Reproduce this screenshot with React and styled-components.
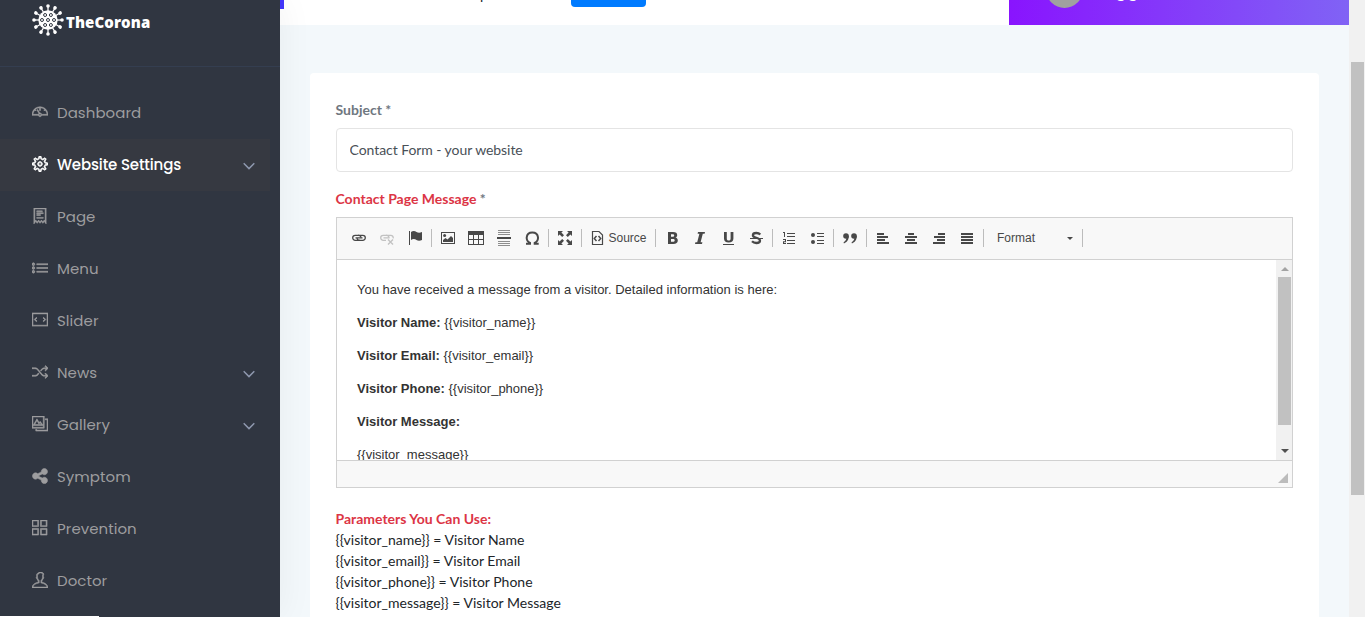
import React from 'react';
import styled, { createGlobalStyle } from 'styled-components';
import {
  TfiDashboard,
  TfiSettings,
  TfiReceipt,
  TfiList,
  TfiLayoutSlider,
  TfiControlShuffle,
  TfiGallery,
  TfiSharethis,
  TfiLayoutGrid2,
  TfiUser,
} from 'react-icons/tfi';

const GlobalStyle = createGlobalStyle`
  * {
    box-sizing: border-box;
  }

  body {
    margin: 0;
    overflow: hidden;
    background: #f3f8fb;
    font-family: Lato, sans-serif;
    font-size: 14px;
  }
`;

const Page = styled.div`
  display: flex;
  height: 617px;
  overflow: hidden;
`;

const Sidebar = styled.aside`
  position: relative;
  z-index: 1;
  flex: none;
  width: 280px;
  background: #303641;
  box-shadow: 2px 0 32px rgba(0, 0, 0, 0.05);
`;

const SidebarHeader = styled.div`
  display: flex;
  align-items: flex-start;
  height: 67px;
  padding: 4px 32px 0;
  border-bottom: 1px solid #343e50;
`;

const Brand = styled.span`
  margin: 7px 0 0 2px;
  color: #fff;
  font: 800 15px/22px 'Open Sans', sans-serif;
  letter-spacing: 0.1px;
`;

const Menu = styled.nav`
  padding-top: 20px;
`;

const MenuItem = styled.a`
  display: flex;
  align-items: center;
  width: 270px;
  height: 52px;
  padding: 0 15px 2px 32px;
  color: ${(props) => (props.$active ? '#fff' : '#9d9d9f')};
  background: ${(props) => (props.$active ? '#363941' : 'transparent')};
`;

const MenuIcon = styled.span`
  display: flex;
  margin: 0 9px 1px 0;

  svg {
    stroke: currentColor;
    stroke-width: ${(props) => (props.$active ? 0.8 : 0.6)};
  }
`;

const MenuLabel = styled.span`
  flex: 1;
  font-family: Poppins, Inter, sans-serif;
  font-size: 15px;
  font-weight: ${(props) => (props.$active ? 500 : 400)};
  letter-spacing: ${(props) => (props.$active ? '-0.15px' : '0.05px')};
`;

const Content = styled.main`
  display: flex;
  flex: 1;
  flex-direction: column;
`;

const TopBar = styled.header`
  display: flex;
  justify-content: space-between;
  height: 25px;
  overflow: hidden;
  background: #fff;
`;

const TitleArea = styled.div`
  display: flex;
  align-items: flex-start;
`;

const Accent = styled.span`
  width: 4px;
  height: 9px;
  background: #4336fb;
`;

const Crumb = styled.span`
  width: 91px;
  margin: -14px 0 0 196px;
  color: #212529;
  font-size: 14px;
  line-height: 17px;
`;

const TopButton = styled.span`
  width: 75px;
  height: 7px;
  background: #007bff;
  border-radius: 0 0 4px 4px;
`;

const Profile = styled.div`
  display: flex;
  align-items: flex-start;
  width: 340px;
  padding-left: 37px;
  background: linear-gradient(to right, #8914fe 0%, #8063f5 100%);
`;

const Avatar = styled.span`
  width: 37px;
  height: 37px;
  margin-top: -29px;
  background: #a0a0a0;
  border-radius: 50%;
`;

const ProfileName = styled.span`
  margin: -20px 0 0 32px;
  color: #fff;
  font: 500 17px/20px Poppins, Inter, sans-serif;
  letter-spacing: 0.5px;
`;

const Card = styled.section`
  flex: 1;
  margin: 48px 30px 0;
  padding: 26px 26px 0 25px;
  background: #fff;
  border-radius: 4px 4px 0 0;
`;

const Label = styled.label`
  display: block;
  padding-left: 0.5px;
  color: #6f7780;
  font-weight: 700;
  line-height: 21px;

  em {
    color: #dc3545;
    font-style: normal;
  }
`;

const Input = styled.input`
  display: block;
  width: 957px;
  height: 44px;
  margin: 8px 0 16px 1px;
  padding: 0 13px 2px 12.5px;
  color: #495057;
  font: 14px Lato, sans-serif;
  letter-spacing: -0.06px;
  border: 1px solid #e4e4e4;
  border-radius: 4px;
  outline: none;
`;

const Editor = styled.div`
  width: 957px;
  height: 271px;
  margin: 8px 0 20px 1px;
  border: 1px solid #d1d1d1;
`;

const Toolbar = styled.div`
  display: flex;
  align-items: center;
  height: 42px;
  padding: 0 8px 1px;
  background: #f8f8f8;
  border-bottom: 1px solid #d1d1d1;
`;

const ToolButton = styled.span`
  display: flex;
  flex: none;
  align-items: center;
  gap: 2.5px;
  width: ${(props) => props.$width || 28}px;
  padding: 0 6px;
  color: #484848;
  font: 12px 'Liberation Sans', Arial, sans-serif;
  opacity: ${(props) => (props.$disabled ? 0.3 : 1)};

  svg {
    flex: none;
  }
`;

const Separator = styled.span`
  width: 1px;
  height: 18px;
  margin: 0 2px;
  background: #bcbcbc;
`;

const Combo = styled.span`
  display: flex;
  align-items: center;
  justify-content: space-between;
  width: 94px;
  padding: 0 7px 0 11px;
  color: #484848;
  font: 12px 'Liberation Sans', Arial, sans-serif;
`;

const Caret = styled.i`
  margin-top: 1px;
  border: 3px solid transparent;
  border-top-color: #484848;
  border-bottom: 0;
`;

const EditorBody = styled.div`
  display: flex;
  height: 200px;
  overflow: hidden;
`;

const Document = styled.div`
  flex: 1;
  padding: 20px 20px 0;
  color: #333;
  font: 13px/20px 'Liberation Sans', Arial, sans-serif;

  p {
    margin: 0 0 13px;
  }
`;

const InnerScroll = styled.div`
  display: flex;
  flex-direction: column;
  justify-content: space-between;
  align-items: center;
  width: 16px;
  padding: 7px 0 7px;
  background: #f1f1f1;
`;

const InnerThumb = styled.span`
  width: 13px;
  height: 148px;
  margin: 6px 0 auto 1px;
  background: #c1c1c1;
`;

const ScrollArrow = styled.i`
  margin-left: 1px;
  border: 4px solid transparent;
  ${(props) =>
    props.$up
      ? 'border-top: 0; border-bottom-color: #a3a3a3;'
      : 'border-bottom: 0; border-top-color: #505050;'}
`;

const EditorFooter = styled.div`
  display: flex;
  align-items: flex-end;
  justify-content: flex-end;
  height: 27px;
  padding: 0 4px 4px;
  background: #f8f8f8;
  border-top: 1px solid #d1d1d1;
`;

const Resizer = styled.i`
  border: 5px solid #bcbcbc;
  border-top-color: transparent;
  border-left-color: transparent;
`;

const Params = styled.div`
  padding-left: 0.5px;
  color: #212529;
  line-height: 21px;

  strong {
    display: block;
    color: #dc3545;
  }
`;

const PageScroll = styled.div`
  width: 16px;
  padding: 62px 1px 0 2px;
  background: #f1f1f1;
`;

const PageThumb = styled.div`
  height: 433px;
  background: #c1c1c1;
`;

const StatusBubble = styled.div`
  position: fixed;
  bottom: 0;
  left: 0;
  z-index: 2;
  width: 99px;
  height: 1px;
  background: #fff;
`;

const VirusLogo = () => (
  <svg width="32" height="32" viewBox="-16 -16 32 32" fill="#fff" stroke="#fff">
    <circle r="9.7" stroke="none" />
    {[...Array(12)].map((_, i) => (
      <g key={i} transform={`rotate(${i * 30})`}>
        <path d="M0-9V-14" strokeWidth="1.3" />
        <circle cy="-14" r="1.8" stroke="none" />
      </g>
    ))}
    {[[-2.9, -5], [2.9, -5], [-6, 0], [0, 0], [6, 0], [-2.9, 5], [2.9, 5]].map(([x, y]) => (
      <circle key={`${x},${y}`} cx={x} cy={y} r="1.5" fill="#fff" stroke="#303641" strokeWidth="1" />
    ))}
  </svg>
);

const ChevronIcon = styled.svg`
  margin-top: 3px;
`;

const Chevron = () => (
  <ChevronIcon width="12" height="8" viewBox="0 0 12 8" fill="none" stroke="#8d97ad" strokeWidth="1.5">
    <path d="M.7 1.2 6 6.6l5.3-5.4" />
  </ChevronIcon>
);

const ToolIcon = ({ children }) => (
  <svg width="16" height="16" viewBox="0 0 16 16" fill="#484848">
    {children}
  </svg>
);

const icons = {
  link: (
    <g fill="none" stroke="#484848" strokeWidth="1.3">
      <path d="M9 10.3H4.2a2.5 2.5 0 0 1 0-5h3.6a2.5 2.5 0 0 1 2.3 2.3" />
      <path d="M7 5.3h4.8a2.5 2.5 0 0 1 0 5H8.2a2.5 2.5 0 0 1-2.3-2.3M4.5 7.8h7" />
    </g>
  ),
  unlink: (
    <g fill="none" stroke="#484848" strokeWidth="1.3">
      <path d="M7 10.3H4.2a2.5 2.5 0 0 1 0-5h3.6a2.5 2.5 0 0 1 2.3 2.3" />
      <path d="M7 5.3h4.8a2.5 2.5 0 0 1 2.4 3M4.5 7.8h6" />
      <path d="M9 9.5l5 5M14 9.5l-5 5" />
    </g>
  ),
  flag: <path d="M2 1h1v14H2zM4 2c2-1.5 4-1 5.5 0s3.500 1 5.500 0v8c-2 1-4 1-5.500 0S6 8.500 4 10z" />,
  image: (
    <>
      <path fillRule="evenodd" d="M1 2h14v12H1zM2 3v10h12V3z" />
      <circle cx="4.6" cy="5.6" r="1.5" />
      <path d="M3 12v-2l2.5-2 2 1.5L11 6l2 2v4z" />
    </>
  ),
  table: <path fillRule="evenodd" d="M0 1h16v14H0zM1 5v4h4V5zM6 5v4h4V5zM11 5v4h4V5zM1 10v4h4v-4zM6 10v4h4v-4zM11 10v4h4v-4z" />,
  rule: (
    <>
      <path d="M2 0h12v1H2zM2 2h12v1H2zM2 4h12v1H2zM2 11h12v1H2zM2 13h12v1H2zM2 15h12v1H2z" opacity=".6" />
      <path d="M1 7h14v2H1z" />
    </>
  ),
  omega: <path d="M2 13.8h4v-1C3.6 11.6 2.5 9.7 2.7 7.3 3 4.3 5 2.5 8.3 2.5s5.4 1.8 5.7 4.8c.2 2.4-.9 4.3-3.3 5.5v1h4" fill="none" stroke="#484848" strokeWidth="2" />,
  maximize: (
    <path d="M1 1h5L4.400 2.600 7 5.200 5.200 7 2.600 4.400 1 6zM15 1h-5l1.600 1.600L9 5.200 10.800 7l2.600-2.600L15 6zM1 15h5l-1.600-1.600L7 10.800 5.200 9l-2.600 2.600L1 10zM15 15h-5l1.600-1.600L9 10.800 10.800 9l2.600 2.600L15 10z" />
  ),
  source: (
    <g fill="none" stroke="#484848" strokeWidth="1.2">
      <path d="M2.5 1.5h6.500l3.500 3.500v9.500h-10z" />
      <path d="M6.5 6 4.3 8.5l2.2 2.5M8.5 6l2.2 2.5L8.5 11" strokeWidth="1.5" />
    </g>
  ),
  bold: <path fillRule="evenodd" d="M4 2h5c3 0 4.2 1.200 4.200 3 0 1.300-.7 2.200-1.800 2.600 1.400.3 2.400 1.400 2.400 2.900 0 2.300-1.600 3.500-4.500 3.500H4zM7 4.200v2.600h1.500c1.100 0 1.700-.4 1.700-1.300s-.6-1.300-1.700-1.300zM7 8.900v2.900h1.800c1.200 0 1.900-.5 1.900-1.500s-.7-1.400-1.900-1.400z" />,
  italic: <path d="M6 2h7l-.4 1.700h-1.800L8.600 12.300h1.800L10 14H3l.4-1.700h1.800l2.200-8.600H5.600z" />,
  underline: <path d="M4 2h2.800v6.500c0 1.400.6 2 1.900 2s1.900-.6 1.900-2V2h2.800v6.600c0 2.600-1.700 3.900-4.700 3.900S4 11.200 4 8.600zM3 14h11v1H3z" />,
  strike: (
    <>
      <path d="M12.3 4.600C11.300 3.500 10 3 8.300 3 6.300 3 4.900 3.800 4.900 5.200 4.900 8.500 12 7 12 10.700 12 12.200 10.300 13 8.300 13c-1.800 0-3.200-.6-4.300-1.700" fill="none" stroke="#484848" strokeWidth="2.3" />
      <path d="M2 8h13v1H2z" />
    </>
  ),
  numbered: (
    <>
      <path d="M6 3h8v1H6zM6 6h8v1H6zM6 10h8v1H6zM6 13h8v1H6z" />
      <path d="M2 2h2v5H3V3H2zM2 9h3v3.200H3V13h2v1H2v-2.700h2V10H2z" />
    </>
  ),
  bullets: (
    <>
      <path d="M8 3h7v1H8zM8 6h7v1H8zM8 10h7v1H8zM8 13h7v1H8z" />
      <circle cx="4" cy="5" r="2" />
      <circle cx="4" cy="12" r="2" />
    </>
  ),
  quote: (
    <>
      <circle cx="4" cy="6" r="2.8" />
      <path d="M6.8 5.600C7 9.500 5 12.300 2 13.400l-.5-1C3.500 11 4.500 9.500 4.300 8z" />
      <circle cx="12" cy="6" r="2.8" />
      <path d="M14.8 5.600c.2 3.900-1.800 6.700-4.800 7.800l-.5-1c2-1.400 3-2.900 2.800-4.400z" />
    </>
  ),
  left: <path d="M2 3h7v2H2zM2 6h11v2H2zM2 9h8v2H2zM2 12h12v2H2z" />,
  center: <path d="M5 3h6v2H5zM2 6h12v2H2zM4 9h8v2H4zM2 12h12v2H2z" />,
  right: <path d="M7 3h7v2H7zM3 6h11v2H3zM6 9h8v2H6zM2 12h12v2H2z" />,
  justify: <path d="M2 3h12v2H2zM2 6h12v2H2zM2 9h12v2H2zM2 12h12v2H2z" />,
};

const toolGroups = [
  ['link', 'unlink', 'flag'],
  ['image', 'table', 'rule', 'omega'],
  ['maximize'],
  ['source'],
  ['bold', 'italic', 'underline', 'strike'],
  ['numbered', 'bullets'],
  ['quote'],
  ['left', 'center', 'right', 'justify'],
];

const menu = [
  { label: 'Dashboard', Icon: TfiDashboard },
  { label: 'Website Settings', Icon: TfiSettings, active: true, arrow: true },
  { label: 'Page', Icon: TfiReceipt },
  { label: 'Menu', Icon: TfiList },
  { label: 'Slider', Icon: TfiLayoutSlider },
  { label: 'News', Icon: TfiControlShuffle, arrow: true },
  { label: 'Gallery', Icon: TfiGallery, arrow: true },
  { label: 'Symptom', Icon: TfiSharethis },
  { label: 'Prevention', Icon: TfiLayoutGrid2 },
  { label: 'Doctor', Icon: TfiUser },
];

const params = [
  ['{{visitor_name}}', 'Visitor Name'],
  ['{{visitor_email}}', 'Visitor Email'],
  ['{{visitor_phone}}', 'Visitor Phone'],
  ['{{visitor_message}}', 'Visitor Message'],
];

const App = () => {
  return (
    <Page>
      <GlobalStyle />
      <Sidebar>
        <SidebarHeader>
          <VirusLogo />
          <Brand>TheCorona</Brand>
        </SidebarHeader>
        <Menu>
          {menu.map(({ label, Icon, active, arrow }) => (
            <MenuItem key={label} $active={active}>
              <MenuIcon $active={active}>
                <Icon size={16} />
              </MenuIcon>
              <MenuLabel $active={active}>{label}</MenuLabel>
              {arrow && <Chevron />}
            </MenuItem>
          ))}
        </Menu>
      </Sidebar>
      <Content>
        <TopBar>
          <TitleArea>
            <Accent />
            <Crumb>p</Crumb>
            <TopButton />
          </TitleArea>
          <Profile>
            <Avatar />
            <ProfileName>gg</ProfileName>
          </Profile>
        </TopBar>
        <Card>
          <Label>Subject *</Label>
          <Input defaultValue="Contact Form - your website" />
          <Label><em>Contact Page Message</em> *</Label>
          <Editor>
            <Toolbar>
              {toolGroups.map((group) => (
                <React.Fragment key={group[0]}>
                  {group.map((name) => (
                    <ToolButton
                      key={name}
                      $disabled={name === 'unlink'}
                      $width={name === 'source' ? 69 : 28}
                    >
                      <ToolIcon>{icons[name]}</ToolIcon>
                      {name === 'source' && 'Source'}
                    </ToolButton>
                  ))}
                  <Separator />
                </React.Fragment>
              ))}
              <Combo>
                Format
                <Caret />
              </Combo>
              <Separator />
            </Toolbar>
            <EditorBody>
              <Document>
                <p>You have received a message from a visitor. Detailed information is here:</p>
                <p><b>Visitor Name:</b> {'{{visitor_name}}'}</p>
                <p><b>Visitor Email:</b> {'{{visitor_email}}'}</p>
                <p><b>Visitor Phone:</b> {'{{visitor_phone}}'}</p>
                <p><b>Visitor Message:</b></p>
                <p>{'{{visitor_message}}'}</p>
              </Document>
              <InnerScroll>
                <ScrollArrow $up />
                <InnerThumb />
                <ScrollArrow />
              </InnerScroll>
            </EditorBody>
            <EditorFooter>
              <Resizer />
            </EditorFooter>
          </Editor>
          <Params>
            <strong>Parameters You Can Use:</strong>
            {params.map(([key, text]) => (
              <div key={key}>{key} = {text}</div>
            ))}
          </Params>
        </Card>
      </Content>
      <PageScroll>
        <PageThumb />
      </PageScroll>
      <StatusBubble />
    </Page>
  );
};

export default App;
